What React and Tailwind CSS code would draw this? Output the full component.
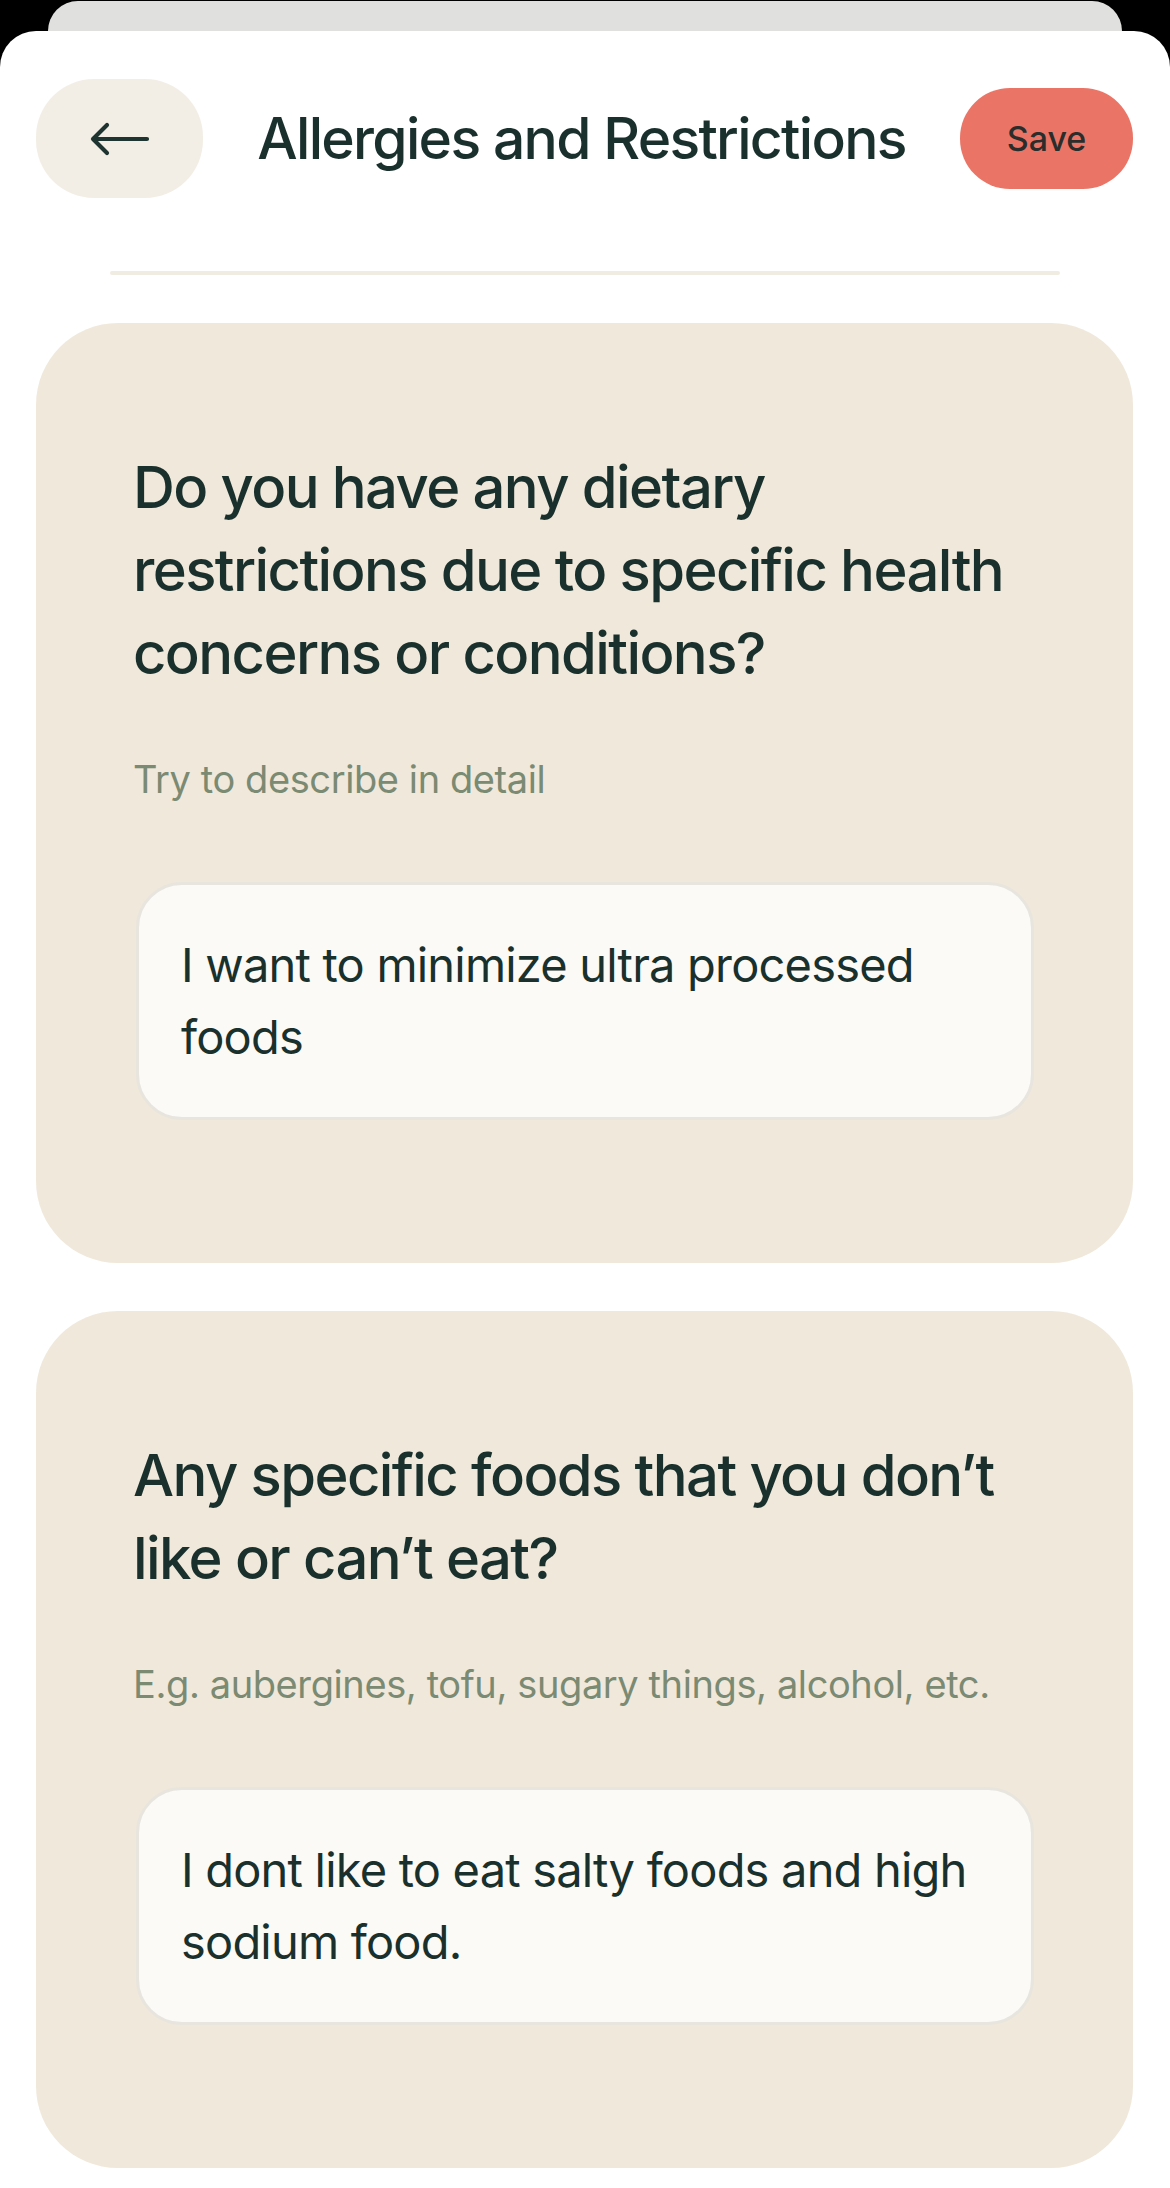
import { useState } from 'react';

const questions = [
  {
    id: 'health',
    lines: ['Do you have any dietary', 'restrictions due to specific health', 'concerns or conditions?'],
    hint: 'Try to describe in detail',
    answer: ['I want to minimize ultra processed', 'foods'],
  },
  {
    id: 'dislikes',
    lines: ['Any specific foods that you don\u2019t', 'like or can\u2019t eat?'],
    hint: 'E.g. aubergines, tofu, sugary things, alcohol, etc.',
    answer: ['I dont like to eat salty foods and high', 'sodium food.'],
  },
];

function BackArrow() {
  return (
    <svg width="60" height="34" viewBox="0 0 60 34" fill="none">
      <path d="M3 17H57M3 17L17 3M3 17L17 31" stroke="#1d3430" strokeWidth="4.2" strokeLinecap="round" strokeLinejoin="round" />
    </svg>
  );
}

function QuestionCard({ q }) {
  return (
    <div className="rounded-[82px] bg-[#f0e8db] pl-[97px] pr-[99px] pt-[123px] pb-[143px]">
      <h2 className="text-[58px] leading-[83px] font-medium text-[#1a302c] tracking-[-1.6px]">
        {q.lines.map((l, i) => (
          <span key={i} className="block whitespace-nowrap">{l}</span>
        ))}
      </h2>
      <p className="mt-[60px] text-[38px] leading-[48px] text-[#7b8a72] tracking-[-0.4px] whitespace-nowrap">{q.hint}</p>
      <div className="ml-[3px] mt-[79px] rounded-[46px] border-[3px] border-[#e8e5de] bg-[#fbfaf6] px-[42px] py-[44px]">
        <p className="text-[47px] leading-[72px] text-[#1a302c] tracking-[-0.8px]">
          {q.answer.map((l, i) => (
            <span key={i} className="block whitespace-nowrap">{l}</span>
          ))}
        </p>
      </div>
    </div>
  );
}

export default function App() {
  const [saved, setSaved] = useState(false);

  return (
    <div className="w-[1170px] h-[2188px] overflow-hidden bg-black pt-px" style={{ fontFamily: 'Inter, "Noto Sans", sans-serif' }}>
      <div className="mx-[48px] h-[30px] rounded-t-[30px] bg-[#e0e0de]" />
      <div className="rounded-t-[36px] bg-white min-h-[2157px]">
        <div className="flex items-center justify-between px-[36px] pt-[48px] pr-[37px]">
          <button className="flex h-[119px] w-[167px] items-center justify-center rounded-[58px] bg-[#f3eee5]">
            <BackArrow />
          </button>
          <h1 className="text-[57px] leading-[70px] font-medium text-[#1a302c] tracking-[-1.7px] whitespace-nowrap">
            Allergies and Restrictions
          </h1>
          <button
            onClick={() => setSaved(!saved)}
            className="flex h-[101px] w-[173px] items-center justify-center rounded-[50px] bg-[#ea7566] text-[34px] font-medium text-[#2a2d2b]"
          >
            Save
          </button>
        </div>

        <div className="mx-[110px] mt-[73px] h-[4px] rounded-full bg-[#f1ece2]" />

        <div className="mt-[48px] flex flex-col gap-[48px] px-[36px] pr-[37px]">
          {questions.map((q) => (
            <QuestionCard key={q.id} q={q} />
          ))}
        </div>
      </div>
    </div>
  );
}
